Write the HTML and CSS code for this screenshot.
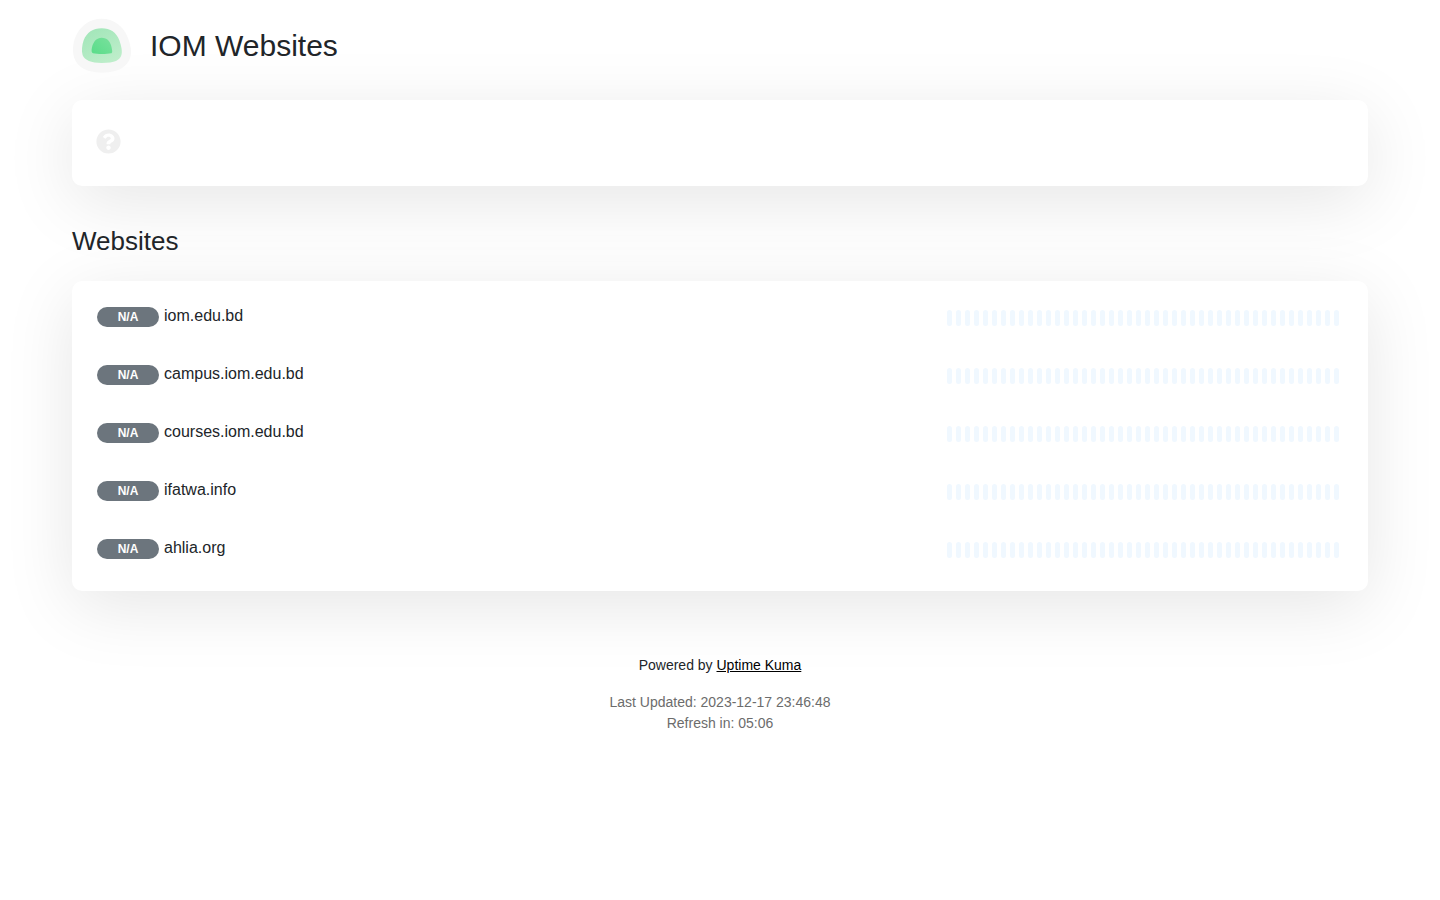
FILE: index.html
```html
<!DOCTYPE html>
<html lang="en">
<head>
<meta charset="utf-8">
<meta name="viewport" content="width=device-width, initial-scale=1">
<title>IOM Websites</title>
<link rel="stylesheet" href="styles.css">
</head>
<body>
<div class="container">
  <header class="header">
    <svg class="logo" viewBox="12 6 180 180" aria-hidden="true">
      <defs>
        <linearGradient id="mid" x1="0.2" y1="0" x2="0.8" y2="1"><stop offset="0" stop-color="#a2e6b9"/><stop offset="1" stop-color="#bfeecb"/></linearGradient>
        <linearGradient id="core" x1="0.1" y1="0.9" x2="0.9" y2="0.2"><stop offset="0" stop-color="#5cdd8b"/><stop offset="1" stop-color="#75e09a"/></linearGradient>
      </defs>
      <path fill="#f7f7f7" d="M101 14C137 14 167 36 180 72C188 94 192 114 187 129C180 152 160 176 101 176C56 176 29 160 19 133C13 114 14 90 22 70C36 35 66 14 101 14Z"/>
      <path fill="url(#mid)" d="M101 43C127 43 146 56 154 79C160 97 164 113 160 124C155 139 142 147 101 147C69 147 50 139 44 124C40 111 42 93 47 79C56 56 75 43 101 43Z"/>
      <path fill="url(#core)" d="M101 71C118 71 128 83 131 101C133 112 134 116 129 118C116 121 88 121 75 118C70 116 70 110 72 100C76 82 86 71 101 71Z"/>
    </svg>
    <h1 class="title">IOM Websites</h1>
  </header>

  <section class="card overall" aria-label="Overall status">
    <svg class="status-icon" viewBox="0 0 512 512" aria-hidden="true"><path d="M504 256c0 136.997-111.043 248-248 248S8 392.997 8 256C8 119.083 119.043 8 256 8s248 111.083 248 248zM262.655 90c-54.497 0-89.255 22.957-116.549 63.758-3.536 5.286-2.353 12.415 2.715 16.258l34.699 26.31c5.205 3.947 12.621 3.008 16.665-2.122 17.864-22.658 30.113-35.797 57.303-35.797 20.429 0 45.698 13.148 45.698 32.958 0 14.976-12.363 22.667-32.534 33.976C247.128 238.528 216 254.941 216 296v4c0 6.627 5.373 12 12 12h56c6.627 0 12-5.373 12-12v-1.333c0-28.462 83.186-29.647 83.186-106.667 0-58.002-60.165-102-116.531-102zM256 338c-25.365 0-46 20.635-46 46 0 25.364 20.635 46 46 46s46-20.636 46-46c0-25.365-20.635-46-46-46z"/></svg>
  </section>

  <h2 class="group-title">Websites</h2>
  <ul class="card monitors" id="monitors">
    <li class="item"><span class="info"><span class="badge">N/A</span><span>iom.edu.bd</span></span><span class="beats"></span></li>
    <li class="item"><span class="info"><span class="badge">N/A</span><span>campus.iom.edu.bd</span></span><span class="beats"></span></li>
    <li class="item"><span class="info"><span class="badge">N/A</span><span>courses.iom.edu.bd</span></span><span class="beats"></span></li>
    <li class="item"><span class="info"><span class="badge">N/A</span><span>ifatwa.info</span></span><span class="beats"></span></li>
    <li class="item"><span class="info"><span class="badge">N/A</span><span>ahlia.org</span></span><span class="beats"></span></li>
  </ul>

  <footer class="footer">
    <p class="powered">Powered by <a class="link" href="#">Uptime Kuma</a></p>
    <div class="refresh">
      <div>Last Updated: 2023-12-17 23:46:48</div>
      <div>Refresh in: 05:06</div>
    </div>
  </footer>
</div>
<script src="beats.js"></script>
</body>
</html>
```

FILE: styles.css
```css
* { box-sizing: border-box; }
body {
  margin: 0;
  background: #fff;
  color: #212529;
  font-family: "Liberation Sans", Arial, sans-serif;
  font-size: 16px;
  line-height: 24px;
}
h1, h2, p, ul { margin: 0; padding: 0; font-weight: 400; }
.container { max-width: 1320px; margin: 0 auto; padding: 16px 12px; }
.header { display: flex; align-items: center; gap: 18px; margin-bottom: 24px; }
.logo { width: 60px; height: 60px; }
.title { font-size: 30px; line-height: 36px; }
.card {
  background: #fff;
  border-radius: 10px;
  box-shadow: 0 15px 70px rgba(0, 0, 0, 0.1);
}
.overall { padding: 29px 24px 32px; }
.status-icon { display: block; width: 25px; height: 25px; fill: #efefef; }
.group-title { margin: 40px 0 24px; font-size: 26px; line-height: 31px; }
.monitors { padding: 10px; list-style: none; }
.item { display: flex; justify-content: space-between; padding: 13px 19px 21px 15px; }
.info { display: flex; gap: 5px; }
.badge {
  width: 62px;
  height: 20px;
  margin-top: 3px;
  border-radius: 10px;
  background: #6c757d;
  color: #fff;
  font-size: 12px;
  font-weight: 700;
  line-height: 20px;
  text-align: center;
}
.beats { display: flex; gap: 4px; padding-top: 6px; }
.beat { width: 5px; height: 16px; border-radius: 3px; background: #f0f8ff; }
.footer { margin-top: 64px; text-align: center; font-size: 14px; line-height: 21px; }
.powered { margin-bottom: 16px; }
.link { color: #000; text-decoration: underline; }
.refresh { color: #6c6c6c; }
```

FILE: beats.js
```js
// Fills every heartbeat bar with empty beats.
const BEAT_COUNT = 44;
document.querySelectorAll(".beats").forEach((bar) => {
  for (let i = 0; i < BEAT_COUNT; i++) {
    const beat = document.createElement("span");
    beat.className = "beat";
    bar.appendChild(beat);
  }
});
```
